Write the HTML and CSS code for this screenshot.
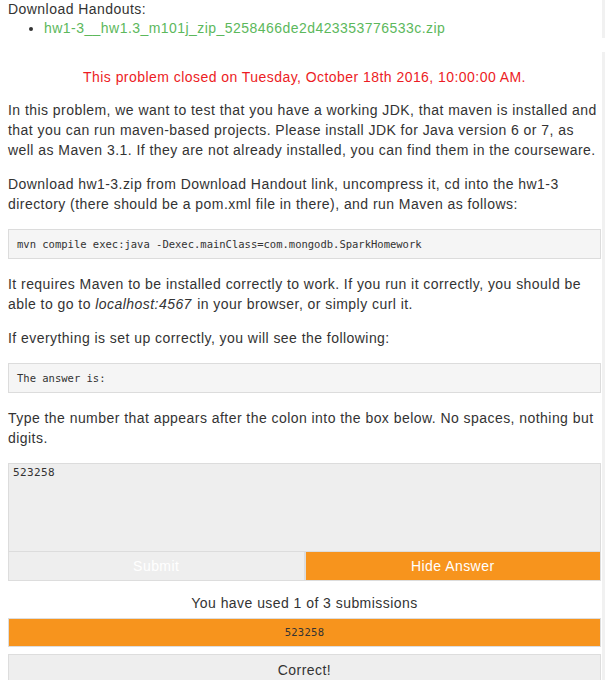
FILE: index.html
```html
<!DOCTYPE html>
<html>
<head>
<meta charset="utf-8">
<link rel="stylesheet" href="styles.css">
</head>
<body>
<div class="page">
  <div class="main">
    <div class="handouts">
      <div class="handouts-title">Download Handouts:</div>
      <ul class="handouts-list">
        <li><a class="handout-link" href="#">hw1-3__hw1.3_m101j_zip_5258466de2d423353776533c.zip</a></li>
      </ul>
    </div>
    <p class="closed">This problem closed on Tuesday, October 18th 2016, 10:00:00 AM.</p>
    <p class="text">In this problem, we want to test that you have a working JDK, that maven is installed and that you can run maven-based projects. Please install JDK for Java version 6 or 7, as well as Maven 3.1. If they are not already installed, you can find them in the courseware.</p>
    <p class="text">Download hw1-3.zip from Download Handout link, uncompress it, cd into the hw1-3 directory (there should be a pom.xml file in there), and run Maven as follows:</p>
    <pre class="code">mvn compile exec:java -Dexec.mainClass=com.mongodb.SparkHomework</pre>
    <p class="text">It requires Maven to be installed correctly to work. If you run it correctly, you should be able to go to <em class="host">localhost:4567</em> in your browser, or simply curl it.</p>
    <p class="text">If everything is set up correctly, you will see the following:</p>
    <pre class="code">The answer is:</pre>
    <p class="text">Type the number that appears after the colon into the box below. No spaces, nothing but digits.</p>
    <div class="answer-box">523258</div>
    <div class="buttons">
      <button class="btn btn-submit">Submit</button>
      <button class="btn btn-hide">Hide Answer</button>
    </div>
    <div class="used">You have used 1 of 3 submissions</div>
    <div class="given">523258</div>
    <div class="result">Correct!</div>
  </div>
  <div class="edge">
    <div class="edge-top"></div>
    <div class="edge-gap"></div>
    <div class="edge-rest"></div>
  </div>
</div>
</body>
</html>
```

FILE: styles.css
```css
html, body {
  margin: 0;
  padding: 0;
  background: #ffffff;
  height: 100%;
  overflow: hidden;
}

body {
  font-family: "Liberation Sans", Arial, sans-serif;
  font-size: 14px;
  letter-spacing: 0.45px;
  color: #333333;
}

.page {
  display: flex;
  height: 100%;
}

.main {
  width: 593px;
  padding-left: 8px;
  flex: none;
}

.edge {
  width: 3px;
  margin-left: 1px;
  display: flex;
  flex-direction: column;
}

.edge-top {
  height: 38px;
  background: #f1f1f1;
}

.edge-gap {
  height: 14px;
}

.edge-rest {
  flex: 1;
  background: #f1f1f1;
}

.handouts {
  line-height: 19px;
}

.handouts-title {
  margin-top: 0;
}

.handouts-list {
  margin: 0;
  padding-left: 36px;
}

.handout-link {
  color: #5cb85c;
  text-decoration: none;
}

.closed {
  margin: 29px 0 13px;
  text-align: center;
  color: #ec1c24;
  line-height: 20px;
}

.text {
  margin: 0 0 14px;
  line-height: 20px;
}

.host {
  padding-right: 1px;
}

.code {
  margin: 15px 0;
  border: 1px solid #dcdcdc;
  background: #f5f5f5;
  padding: 0 8px;
  line-height: 28px;
  font-family: "DejaVu Sans Mono", "Liberation Mono", monospace;
  font-size: 10.5px;
  letter-spacing: 0;
  color: #333333;
}

.answer-box {
  margin-top: 15px;
  height: 81px;
  border: 1px solid #dcdcdc;
  background: #eeeeee;
  padding: 2px 4px 4px;
  font-family: "DejaVu Sans Mono", "Liberation Mono", monospace;
  font-size: 11px;
  line-height: 14px;
  letter-spacing: 0.4px;
  color: #333333;
}

.buttons {
  display: grid;
  grid-template-columns: 1fr 1fr;
  gap: 2px;
  background: #dddddd;
  border: 1px solid #dddddd;
  border-top: 0;
}

.btn {
  border: 0;
  margin: 0;
  height: 28px;
  font-family: "Liberation Sans", Arial, sans-serif;
  font-size: 14px;
  letter-spacing: 0.45px;
  color: #ffffff;
  padding: 0;
}

.btn-submit {
  background: #eeeeee;
}

.btn-hide {
  background: #f7941d;
}

.used {
  margin-top: 12px;
  text-align: center;
  line-height: 20px;
}

.given {
  margin-top: 5px;
  border: 1px solid #dddddd;
  background: #f7941d;
  height: 27px;
  line-height: 27px;
  text-align: center;
  font-family: "DejaVu Sans Mono", "Liberation Mono", monospace;
  font-size: 10.5px;
  letter-spacing: 0.3px;
  color: #333333;
}

.result {
  margin-top: 7px;
  border: 1px solid #dddddd;
  background: #eeeeee;
  height: 40px;
  padding-top: 4px;
  line-height: 22px;
  text-align: center;
  font-size: 14px;
}
```
